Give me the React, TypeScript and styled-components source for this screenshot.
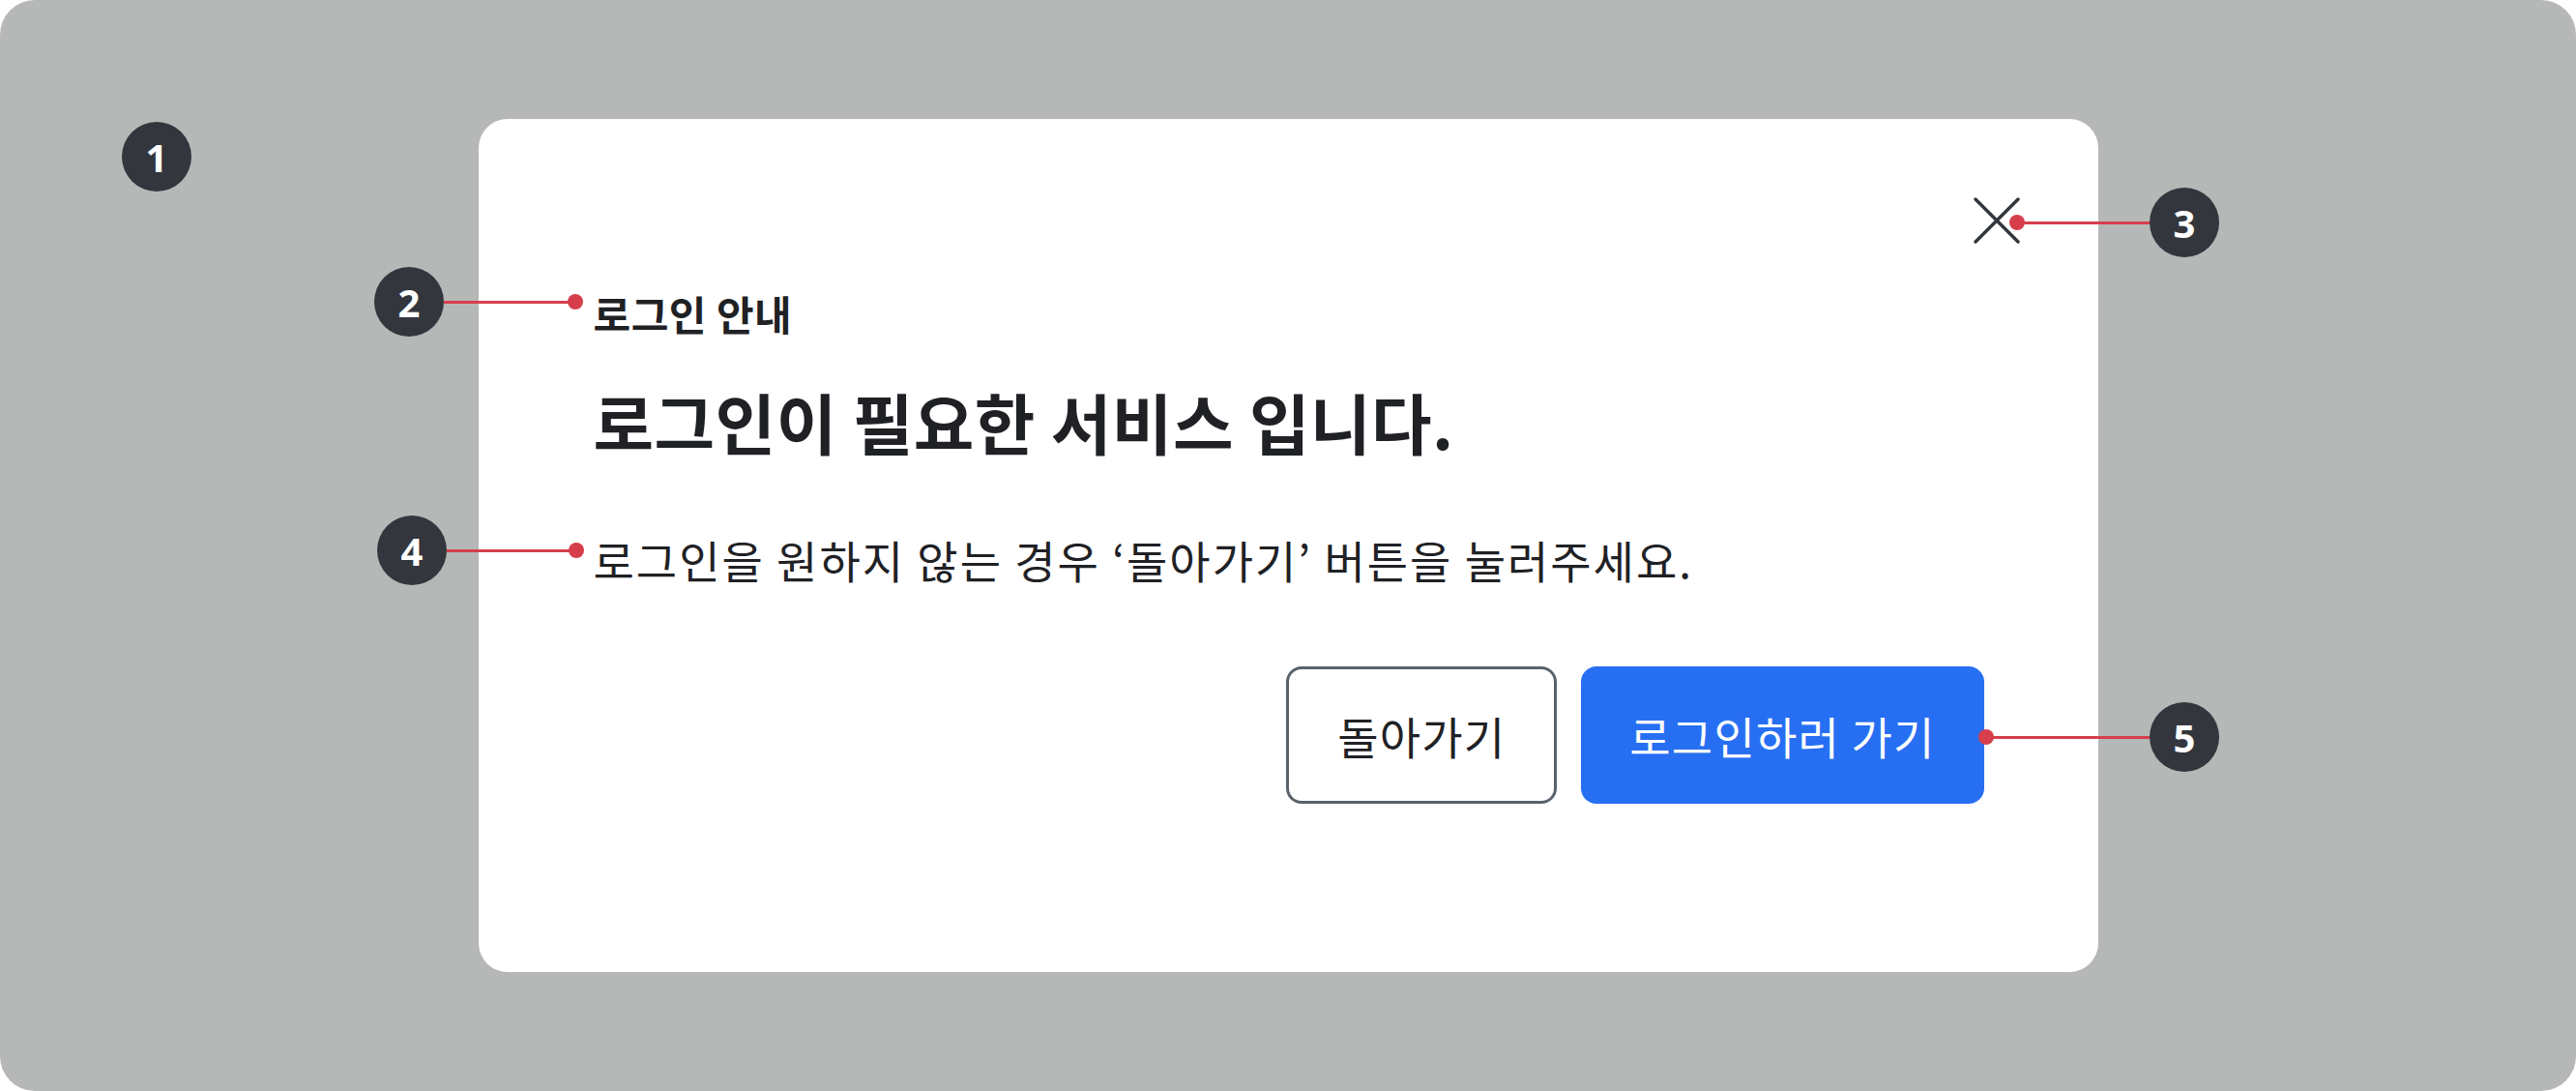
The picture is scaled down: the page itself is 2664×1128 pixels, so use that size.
import React from 'react';
import styled, { createGlobalStyle } from 'styled-components';

const GlobalStyle = createGlobalStyle`
  html, body {
    margin: 0;
    padding: 0;
    background: #ffffff;
  }
  body {
    font-family: "Noto Sans CJK KR", "Noto Sans", sans-serif;
  }
  * {
    box-sizing: border-box;
  }
`;

const Canvas = styled.div`
  position: relative;
  width: 2664px;
  height: 1128px;
  background: #b6b8b7;
  border-radius: 36px;
  display: flex;
  align-items: center;
  justify-content: center;
  overflow: hidden;
`;

const Modal = styled.div`
  position: relative;
  width: 1675px;
  height: 882px;
  background: #ffffff;
  border-radius: 30px;
  padding: 180px 118px 0 119px;
  display: flex;
  flex-direction: column;
`;

const CloseButton = styled.button`
  position: absolute;
  top: 81px;
  right: 81px;
  width: 48px;
  height: 48px;
  padding: 0;
  border: none;
  background: transparent;
  cursor: pointer;
  display: flex;
`;

const Eyebrow = styled.h3`
  margin: 0;
  font-size: 42px;
  line-height: 42px;
  letter-spacing: 0.5px;
  font-weight: 700;
  color: #1f2125;
`;

const Title = styled.h2`
  margin: 57px 0 0;
  font-size: 68px;
  line-height: 68px;
  letter-spacing: 0.5px;
  font-weight: 700;
  color: #1f2125;
`;

const Body = styled.p`
  margin: 85px 0 0;
  font-size: 46px;
  line-height: 46px;
  letter-spacing: 2px;
  font-weight: 400;
  color: #1f2125;
`;

const Actions = styled.div`
  margin-top: 88px;
  display: flex;
  justify-content: flex-end;
  gap: 25px;
`;

const Button = styled.button<{ $primary?: boolean }>`
  height: 142px;
  padding: 0 50px;
  border-radius: 16px;
  font-family: "Noto Sans CJK KR", "Noto Sans", sans-serif;
  font-size: 46px;
  letter-spacing: 1.2px;
  font-weight: 400;
  cursor: pointer;
  border: ${p => (p.$primary ? 'none' : '3px solid #5a626b')};
  background: ${p => (p.$primary ? '#276ff2' : '#ffffff')};
  color: ${p => (p.$primary ? '#ffffff' : '#1f2125')};
`;

const Callout = styled.div<{ $reverse?: boolean }>`
  position: absolute;
  display: flex;
  align-items: center;
  flex-direction: ${p => (p.$reverse ? 'row-reverse' : 'row')};
  transform: translateY(-50%);
`;

const Badge = styled.div`
  width: 72px;
  height: 72px;
  border-radius: 50%;
  background: #33363d;
  color: #ffffff;
  display: flex;
  align-items: center;
  justify-content: center;
  font-family: "Noto Sans", sans-serif;
  font-weight: 700;
  font-size: 40px;
  flex-shrink: 0;
`;

const Leader = styled.div`
  height: 3px;
  background: #d63e4c;
`;

const Dot = styled.div`
  width: 16px;
  height: 16px;
  border-radius: 50%;
  background: #d63e4c;
  flex-shrink: 0;
  margin: 0 -8px;
`;

interface Marker {
  n: number;
  badgeX: number;
  dotX?: number;
  y: number;
}

const markers: Marker[] = [
  { n: 1, badgeX: 162, y: 162 },
  { n: 2, badgeX: 423, dotX: 595, y: 312 },
  { n: 3, badgeX: 2259, dotX: 2086, y: 230 },
  { n: 4, badgeX: 426, dotX: 596, y: 569 },
  { n: 5, badgeX: 2259, dotX: 2054, y: 762 },
];

const Annotation: React.FC<{ m: Marker }> = ({ m }) => {
  if (m.dotX === undefined) {
    return (
      <Callout style={{ left: m.badgeX - 36, top: m.y }}>
        <Badge>{m.n}</Badge>
      </Callout>
    );
  }
  const reverse = m.dotX < m.badgeX;
  const len = Math.abs(m.dotX - m.badgeX) - 36;
  const left = reverse ? m.dotX : m.badgeX - 36;
  return (
    <Callout $reverse={reverse} style={{ left, top: m.y }}>
      <Badge>{m.n}</Badge>
      <Leader style={{ width: len }} />
      <Dot />
    </Callout>
  );
};

export default function App() {
  return (
    <>
      <GlobalStyle />
      <Canvas>
        <Modal>
          <CloseButton aria-label="닫기">
            <svg width="48" height="48" viewBox="0 0 48 48" fill="none">
              <path d="M2 2L46 46M46 2L2 46" stroke="#33363d" strokeWidth="3.5" strokeLinecap="round" />
            </svg>
          </CloseButton>
          <Eyebrow>로그인 안내</Eyebrow>
          <Title>로그인이 필요한 서비스 입니다.</Title>
          <Body>로그인을 원하지 않는 경우 ‘돌아가기’ 버튼을 눌러주세요.</Body>
          <Actions>
            <Button>돌아가기</Button>
            <Button $primary>로그인하러 가기</Button>
          </Actions>
        </Modal>
        {markers.map(m => (
          <Annotation key={m.n} m={m} />
        ))}
      </Canvas>
    </>
  );
}
